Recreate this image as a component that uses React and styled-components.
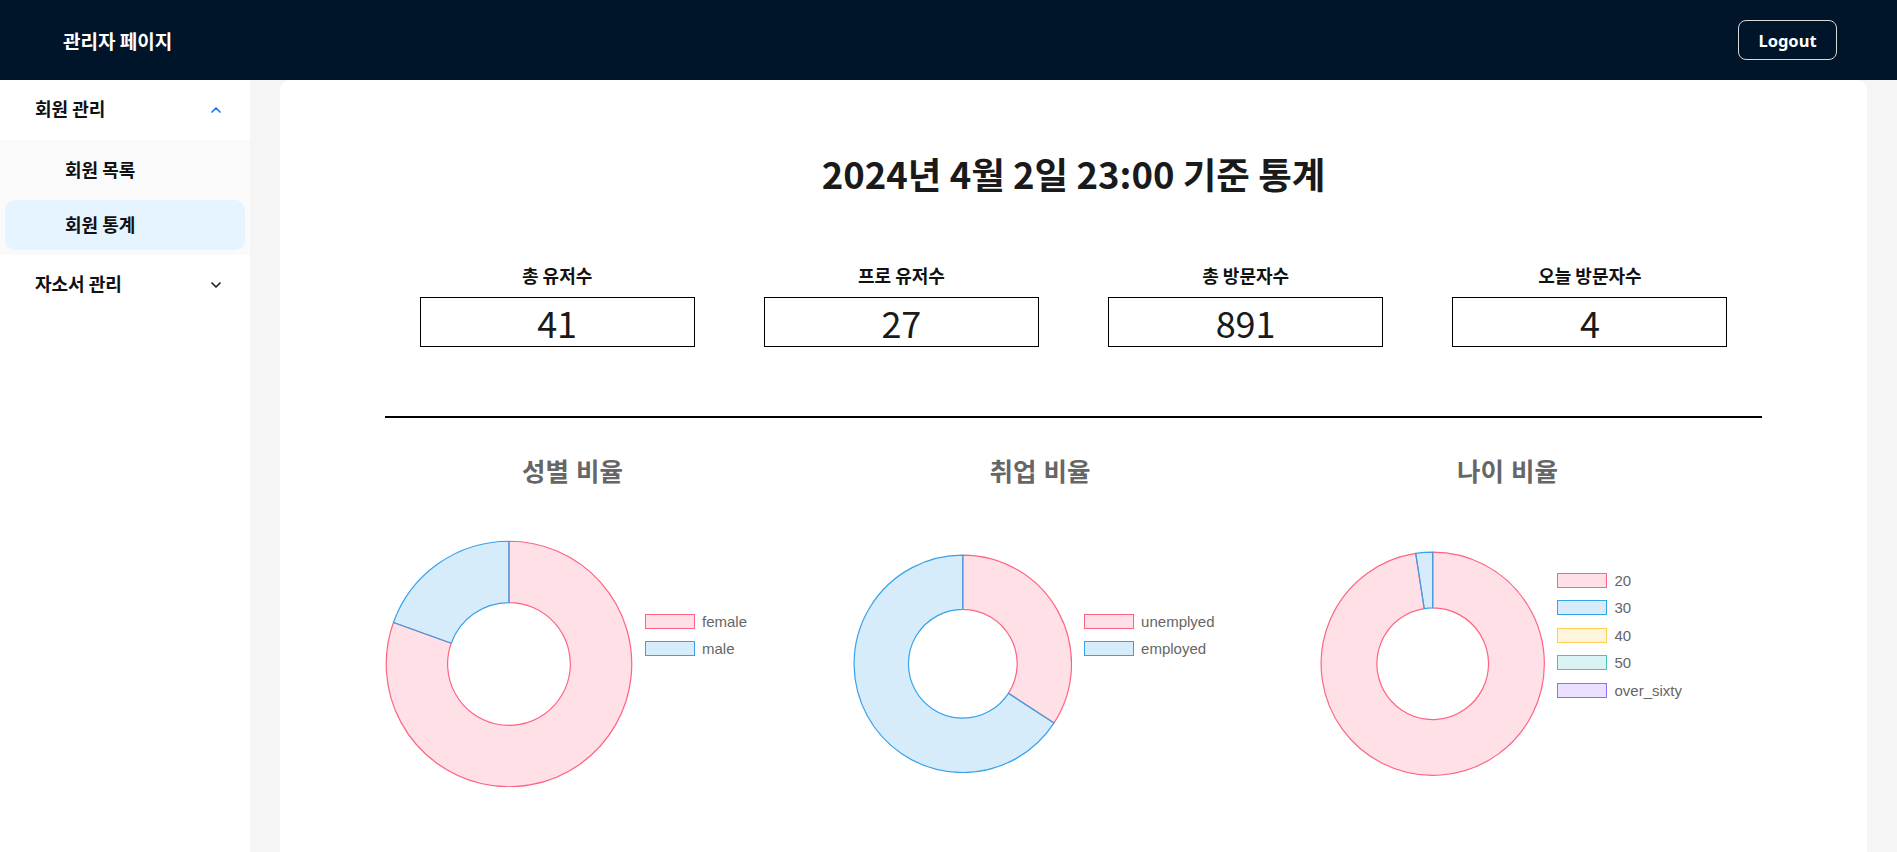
import React from "react";
import styled, { createGlobalStyle } from "styled-components";
import { ChevronUp, ChevronDown } from "lucide-react";

const GlobalStyle = createGlobalStyle`
  html, body, #root { margin: 0; padding: 0; height: 100%; }
  body {
    font-family: "Noto Sans CJK KR", "Noto Sans", sans-serif;
    color: rgba(0, 0, 0, 0.88);
    overflow: hidden;
  }
  * { box-sizing: border-box; }
`;

const Page = styled.div`
  height: 100vh;
  display: flex;
  flex-direction: column;
`;

const Header = styled.header`
  flex: none;
  height: 80px;
  background: #001529;
  display: flex;
  align-items: center;
  justify-content: space-between;
  padding: 0 60px 0 63px;
`;

const Brand = styled.div`
  color: #fff;
  font-size: 19px;
  font-weight: 700;
`;

const LogoutButton = styled.button`
  width: 99px;
  height: 40px;
  background: transparent;
  border: 1px solid #d9d9d9;
  border-radius: 8px;
  color: #fff;
  font-family: "Noto Sans", "Noto Sans CJK KR", sans-serif;
  font-size: 16.5px;
  font-weight: 700;
  cursor: pointer;
`;

const Body = styled.div`
  flex: 1;
  min-height: 0;
  display: flex;
`;

const Sidebar = styled.nav`
  width: 250px;
  flex: none;
  background: #fff;
`;

const MenuRow = styled.div`
  height: 50px;
  margin: 5px 5px;
  padding: 0 21px 4px 30px;
  display: flex;
  align-items: center;
  justify-content: space-between;
  font-size: 18px;
  font-weight: 600;
  color: #111;
  border-radius: 10px;
  svg { color: ${(p) => (p.$open ? "#1677ff" : "#222")}; margin-top: 4px; }
`;

const SubList = styled.div`
  background: #fafafa;
  padding: 5px 0;
  display: flex;
  flex-direction: column;
  gap: 5px;
`;

const SubItem = styled.div`
  height: 50px;
  margin: 0 5px;
  padding: 0 0 3px 60px;
  display: flex;
  align-items: center;
  font-size: 18px;
  font-weight: 600;
  color: #111;
  border-radius: 10px;
  background: ${(p) => (p.$active ? "#e6f4ff" : "transparent")};
`;

const Main = styled.main`
  flex: 1;
  min-width: 0;
  background: #f5f5f5;
  padding: 0 30px;
  overflow: hidden;
`;

const Card = styled.section`
  background: #fff;
  border-radius: 10px 10px 0 0;
  height: 100%;
  padding-top: 73px;
`;

const Title = styled.h1`
  margin: 0;
  text-align: center;
  font-size: 36.5px;
  line-height: 42px;
  font-weight: 700;
  color: #1a1a1a;
`;

const Wrapper = styled.div`
  width: 1377px;
  margin: 0 auto;
`;

const StatsRow = styled.div`
  margin-top: 69px;
  display: grid;
  grid-template-columns: repeat(4, 1fr);
`;

const StatItem = styled.div`
  display: flex;
  flex-direction: column;
  align-items: center;
`;

const StatLabel = styled.div`
  font-size: 18px;
  line-height: 22px;
  font-weight: 600;
  color: #111;
  margin-bottom: 11px;
`;

const StatBox = styled.div`
  width: 275px;
  height: 50px;
  border: 1px solid #000;
  display: flex;
  align-items: center;
  justify-content: center;
  font-size: 36px;
  font-weight: 400;
  color: #1a1a1a;
`;

const Divider = styled.hr`
  margin: 69px 0 0;
  border: none;
  height: 2px;
  background: #000;
`;

const ChartsRow = styled.div`
  margin-top: 27px;
  display: flex;
  gap: 92.5px;
`;

const ChartCard = styled.div`
  width: 375px;
  height: 382px;
  display: grid;
  grid-template-columns: 1fr auto;
  grid-template-rows: 55px 1fr;
`;

const ChartTitle = styled.div`
  grid-column: 1 / span 2;
  grid-row: 1;
  align-self: center;
  text-align: center;
  font-family: "Liberation Sans", "Noto Sans CJK KR", sans-serif;
  font-size: 25.5px;
  line-height: 1;
  font-weight: 700;
  color: #666;
`;

const DonutArea = styled.div`
  grid-column: 1;
  grid-row: 2;
  display: flex;
  align-items: center;
  justify-content: center;
  svg { width: 100%; height: auto; display: block; }
`;

const Legend = styled.ul`
  grid-column: 2;
  grid-row: 1 / span 2;
  align-self: center;
  list-style: none;
  margin: 0;
  padding: 0 13px 2px 12px;
  display: flex;
  flex-direction: column;
  gap: 12.5px;
`;

const LegendItem = styled.li`
  display: flex;
  align-items: center;
  height: 15px;
  font-family: "Liberation Sans", Arial, sans-serif;
  font-size: 15px;
  color: #666;
`;

const Swatch = styled.span`
  width: 50px;
  height: 15px;
  margin-right: 7px;
  border: 1.5px solid ${(p) => p.$stroke};
  background: ${(p) => p.$fill};
`;

const COLORS = [
  { fill: "rgba(255, 99, 132, 0.2)", stroke: "rgb(255, 99, 132)" },
  { fill: "rgba(54, 162, 235, 0.2)", stroke: "rgb(54, 162, 235)" },
  { fill: "rgba(255, 206, 86, 0.2)", stroke: "rgb(255, 206, 86)" },
  { fill: "rgba(75, 192, 192, 0.2)", stroke: "rgb(75, 192, 192)" },
  { fill: "rgba(153, 102, 255, 0.2)", stroke: "rgb(153, 102, 255)" },
];

const pt = (r, a) => [r * Math.cos(a), r * Math.sin(a)];

function sectorPath(R, r, a0, a1) {
  const large = a1 - a0 > Math.PI ? 1 : 0;
  const [x0, y0] = pt(R, a0);
  const [x1, y1] = pt(R, a1);
  const [x2, y2] = pt(r, a1);
  const [x3, y3] = pt(r, a0);
  return `M${x0} ${y0} A${R} ${R} 0 ${large} 1 ${x1} ${y1} L${x2} ${y2} A${r} ${r} 0 ${large} 0 ${x3} ${y3} Z`;
}

function Donut({ values }) {
  const total = values.reduce((s, v) => s + v, 0);
  let a = -Math.PI / 2;
  const arcs = [];
  values.forEach((v, i) => {
    if (v <= 0) return;
    const span = (v / total) * Math.PI * 2;
    arcs.push({ d: sectorPath(100, 50, a, a + span), c: COLORS[i] });
    a += span;
  });
  return (
    <svg viewBox="-101 -101 202 202">
      {arcs.map((arc, i) => (
        <path
          key={i}
          d={arc.d}
          fill={arc.c.fill}
          stroke={arc.c.stroke}
          strokeWidth="1.2"
          vectorEffect="non-scaling-stroke"
          strokeLinejoin="round"
        />
      ))}
    </svg>
  );
}

function Chart({ title, labels, values }) {
  return (
    <ChartCard>
      <ChartTitle>{title}</ChartTitle>
      <DonutArea>
        <Donut values={values} />
      </DonutArea>
      <Legend>
        {labels.map((l, i) => (
          <LegendItem key={l}>
            <Swatch $fill={COLORS[i].fill} $stroke={COLORS[i].stroke} />
            {l}
          </LegendItem>
        ))}
      </Legend>
    </ChartCard>
  );
}

const stats = [
  { label: "총 유저수", value: 41 },
  { label: "프로 유저수", value: 27 },
  { label: "총 방문자수", value: 891 },
  { label: "오늘 방문자수", value: 4 },
];

const charts = [
  { title: "성별 비율", labels: ["female", "male"], values: [33, 8] },
  { title: "취업 비율", labels: ["unemplyed", "employed"], values: [14, 27] },
  { title: "나이 비율", labels: ["20", "30", "40", "50", "over_sixty"], values: [40, 1, 0, 0, 0] },
];

export default function App() {
  return (
    <Page>
      <GlobalStyle />
      <Header>
        <Brand>관리자 페이지</Brand>
        <LogoutButton>Logout</LogoutButton>
      </Header>
      <Body>
        <Sidebar>
          <MenuRow $open>
            <span>회원 관리</span>
            <ChevronUp size={16} strokeWidth={2.6} />
          </MenuRow>
          <SubList>
            <SubItem>회원 목록</SubItem>
            <SubItem $active>회원 통계</SubItem>
          </SubList>
          <MenuRow>
            <span>자소서 관리</span>
            <ChevronDown size={16} strokeWidth={2.6} />
          </MenuRow>
        </Sidebar>
        <Main>
          <Card>
            <Title>2024년 4월 2일 23:00 기준 통계</Title>
            <Wrapper>
              <StatsRow>
                {stats.map((s) => (
                  <StatItem key={s.label}>
                    <StatLabel>{s.label}</StatLabel>
                    <StatBox>{s.value}</StatBox>
                  </StatItem>
                ))}
              </StatsRow>
              <Divider />
              <ChartsRow>
                {charts.map((c) => (
                  <Chart key={c.title} {...c} />
                ))}
              </ChartsRow>
            </Wrapper>
          </Card>
        </Main>
      </Body>
    </Page>
  );
}
